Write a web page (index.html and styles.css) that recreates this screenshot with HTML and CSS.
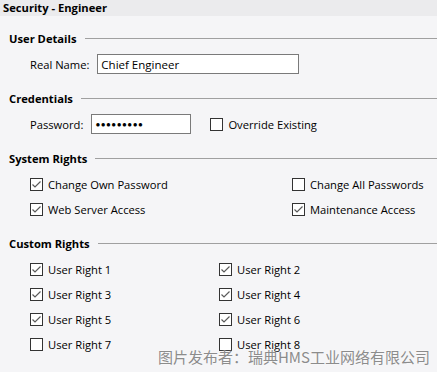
FILE: index.html
```html
<!DOCTYPE html>
<html lang="en">
<head>
  <meta charset="UTF-8">
  <meta name="viewport" content="width=device-width, initial-scale=1.0">
  <title>Security - Engineer</title>
  <link rel="stylesheet" href="styles.css">
</head>
<body>
  <div class="window">
    <div class="title-bar">Security - Engineer</div>

    <div class="content">
      <div class="section">
        <div class="section-head"><span>User Details</span></div>
        <div class="field-row">
          <label for="realName">Real Name:</label>
          <input type="text" id="realName" class="name-input" value="Chief Engineer">
        </div>
      </div>

      <div class="section">
        <div class="section-head"><span>Credentials</span></div>
        <div class="field-row">
          <label for="password">Password:</label>
          <div class="pw-input" id="password">●●●●●●●●●</div>
          <div class="check override"><span class="box"></span>Override Existing</div>
        </div>
      </div>

      <div class="section">
        <div class="section-head"><span>System Rights</span></div>
        <div class="check-grid system">
          <div class="check"><span class="box checked"></span>Change Own Password</div>
          <div class="check"><span class="box"></span>Change All Passwords</div>
          <div class="check"><span class="box checked"></span>Web Server Access</div>
          <div class="check"><span class="box checked"></span>Maintenance Access</div>
        </div>
      </div>

      <div class="section">
        <div class="section-head"><span>Custom Rights</span></div>
        <div class="check-grid custom">
          <div class="check"><span class="box checked"></span>User Right 1</div>
          <div class="check"><span class="box checked"></span>User Right 2</div>
          <div class="check"><span class="box checked"></span>User Right 3</div>
          <div class="check"><span class="box checked"></span>User Right 4</div>
          <div class="check"><span class="box checked"></span>User Right 5</div>
          <div class="check"><span class="box checked"></span>User Right 6</div>
          <div class="check"><span class="box"></span>User Right 7</div>
          <div class="check"><span class="box"></span>User Right 8</div>
        </div>
      </div>
    </div>

    <div class="watermark">图片发布者：瑞典HMS工业网络有限公司</div>
  </div>

  <script>
    // draw the tick into every checked box
    document.querySelectorAll('.box.checked').forEach(function(box) {
      box.innerHTML = '<svg width="11" height="11" viewBox="0 0 11 11"><polyline points="1.5,5.5 4,8 9.5,2.5" fill="none" stroke="#5a5a5a" stroke-width="1.2"/></svg>';
    });
  </script>
</body>
</html>
```

FILE: styles.css
```css
body {
  margin: 0;
  padding: 0;
  font-family: 'Open Sans', 'Noto Sans', sans-serif;
  font-size: 11.2px;
  color: #000;
  background-color: #f5f5f7;
}
.window {
  position: relative;
  width: 437px;
  height: 372px;
  overflow: hidden;
}
.title-bar {
  height: 16px;
  line-height: 15px;
  padding-left: 3px;
  font-weight: 700;
  background-color: #ebebed;
}
.content {
  padding: 14px 0 0 9px;
}
.section {
  margin-bottom: 16px;
}
.section-head {
  display: flex;
  align-items: center;
  height: 16px;
  font-weight: 700;
  margin-bottom: 8px;
}
.section-head::after {
  content: '';
  flex: 1;
  height: 1px;
  margin-left: 8px;
  background-color: #a0a0a0;
}
.field-row {
  display: flex;
  align-items: center;
  height: 20px;
  padding-left: 21px;
}
.field-row label {
  margin-right: 8px;
}
.name-input {
  box-sizing: border-box;
  width: 202px;
  height: 20px;
  padding: 0 3px;
  border: 1px solid #7a7a7a;
  background-color: #fff;
  font-family: inherit;
  font-size: 11.5px;
  outline: none;
}
.pw-input {
  box-sizing: border-box;
  width: 100px;
  height: 20px;
  padding-left: 3px;
  line-height: 18px;
  border: 1px solid #7a7a7a;
  background-color: #fff;
  font-size: 8px;
  letter-spacing: 0.5px;
}
.check {
  display: flex;
  align-items: center;
  height: 20px;
}
.override {
  margin-left: 19px;
}
.box {
  box-sizing: border-box;
  width: 13px;
  height: 13px;
  margin-right: 5px;
  border: 1px solid #333;
  background-color: #fff;
  display: flex;
  align-items: center;
  justify-content: center;
}
.check-grid {
  display: grid;
  row-gap: 5px;
  padding-left: 21px;
}
.system {
  grid-template-columns: 262px auto;
}
.custom {
  grid-template-columns: 189px auto;
}
.watermark {
  position: absolute;
  right: 7px;
  bottom: 5px;
  font-family: 'Noto Sans CJK SC', sans-serif;
  font-size: 15px;
  color: #8c8c8c;
  text-shadow: 0 0 2px #fff;
}
```
